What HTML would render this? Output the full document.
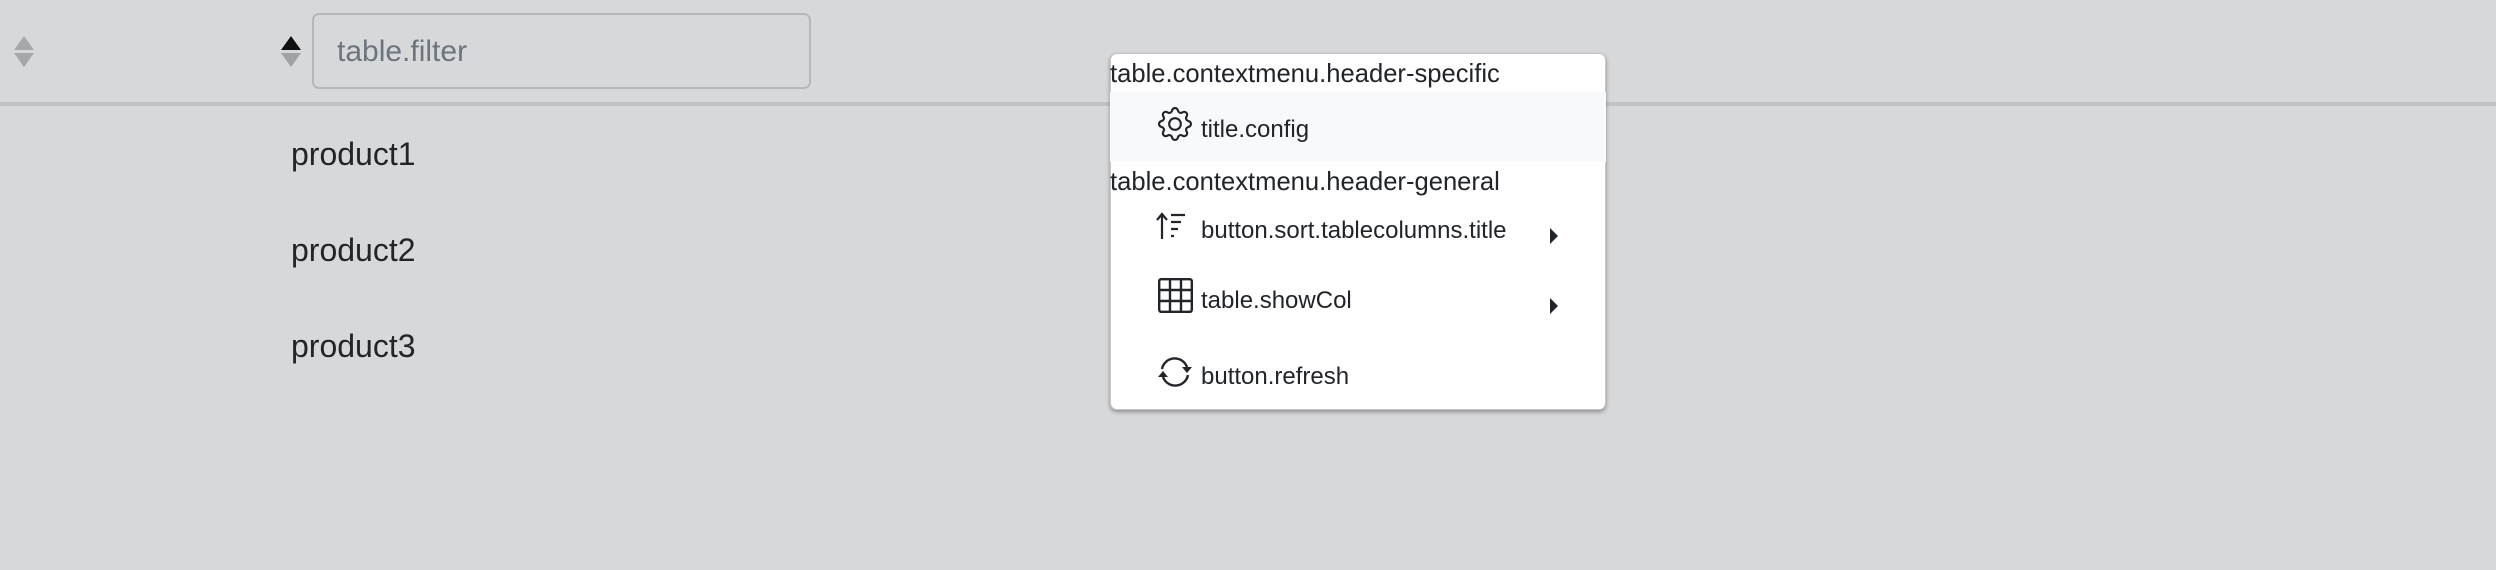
<!DOCTYPE html>
<html><head><meta charset="utf-8"><style>
html,body{margin:0;padding:0;}
body{width:2496px;height:570px;background:#d7d8da;position:relative;overflow:hidden;font-family:"Liberation Sans",sans-serif;color:#212529;}
.a{position:absolute;line-height:1;white-space:nowrap;}
</style></head><body>
<svg class="a" style="left:13px;top:36px" width="22" height="32" viewBox="0 0 22 32"><polygon points="11,0 21,14 1,14" fill="#a5a7a9"/><polygon points="11,31 21,17 1,17" fill="#a5a7a9"/></svg>
<svg class="a" style="left:280px;top:36px" width="22" height="32" viewBox="0 0 22 32"><polygon points="11,0 21,14 1,14" fill="#111"/><polygon points="11,31 21,17 1,17" fill="#a0a2a4"/></svg>
<div class="a" style="left:312px;top:13px;width:495px;height:72px;border:2px solid #b3b8bd;border-radius:7px;"></div>
<div class="a" style="left:337px;top:37px;font-size:30px;color:#6c757d">table.filter</div>
<div class="a" style="left:0;top:102px;width:2496px;height:4px;background:#c0c3c6"></div>
<div class="a" style="left:291px;top:138px;font-size:32px">product1</div>
<div class="a" style="left:291px;top:234px;font-size:32px">product2</div>
<div class="a" style="left:291px;top:330px;font-size:32px">product3</div>
<div class="a" style="left:1110px;top:53px;width:496px;height:357px;background:#fff;border-radius:7px;box-shadow:0 2px 4px rgba(0,0,0,.35);border:1px solid #c4c6c8;box-sizing:border-box"></div>
<div class="a" style="left:1110px;top:92px;width:496px;height:70px;background:#f8f9fa"></div>
<div class="a" style="left:1110px;top:62px;font-size:25.6px">table.contextmenu.header-specific</div>
<div class="a" style="left:1110px;top:170px;font-size:25.6px">table.contextmenu.header-general</div>
<svg class="a" style="left:1158px;top:107px" width="34" height="34" viewBox="0 0 16 16"><path fill="#212529" d="M8 4.754a3.246 3.246 0 1 0 0 6.492 3.246 3.246 0 0 0 0-6.492zM5.754 8a2.246 2.246 0 1 1 4.492 0 2.246 2.246 0 0 1-4.492 0z"/><path fill="#212529" d="M9.796 1.343c-.527-1.790-3.065-1.790-3.592 0l-.094.319a.873.873 0 0 1-1.255.52l-.292-.16c-1.640-.892-3.433.902-2.540 2.541l.159.292a.873.873 0 0 1-.52 1.255l-.319.094c-1.790.527-1.790 3.065 0 3.592l.319.094a.873.873 0 0 1 .52 1.255l-.16.292c-.892 1.640.901 3.434 2.541 2.540l.292-.159a.873.873 0 0 1 1.255.52l.094.319c.527 1.790 3.065 1.790 3.592 0l.094-.319a.873.873 0 0 1 1.255-.52l.292.16c1.640.893 3.434-.902 2.540-2.541l-.159-.292a.873.873 0 0 1 .52-1.255l.319-.094c1.790-.527 1.790-3.065 0-3.592l-.319-.094a.873.873 0 0 1-.52-1.255l.16-.292c.893-1.640-.902-3.433-2.541-2.540l-.292.159a.873.873 0 0 1-1.255-.52l-.094-.319zm-2.633.283c.246-.835 1.428-.835 1.674 0l.094.319a1.873 1.873 0 0 0 2.693 1.115l.291-.16c.764-.415 1.600.42 1.184 1.185l-.159.292a1.873 1.873 0 0 0 1.116 2.692l.318.094c.835.246.835 1.428 0 1.674l-.319.094a1.873 1.873 0 0 0-1.115 2.693l.16.291c.415.764-.42 1.600-1.185 1.184l-.291-.159a1.873 1.873 0 0 0-2.693 1.116l-.094.318c-.246.835-1.428.835-1.674 0l-.094-.319a1.873 1.873 0 0 0-2.692-1.115l-.292.16c-.764.415-1.600-.42-1.184-1.185l.159-.291A1.873 1.873 0 0 0 1.945 8.930l-.319-.094c-.835-.246-.835-1.428 0-1.674l.319-.094A1.873 1.873 0 0 0 3.060 4.377l-.16-.292c-.415-.764.42-1.600 1.185-1.184l.292.159a1.873 1.873 0 0 0 2.692-1.115l.094-.319z"/></svg>
<div class="a" style="left:1201px;top:118px;font-size:24px">title.config</div>
<svg class="a" style="left:1156px;top:211px" width="36" height="30" viewBox="0 0 36 30"><path d="M6 28V4M1 9l5-6 5 6" stroke="#212529" stroke-width="2.2" fill="none"/><path d="M15 4h14M15 11h10M15 18h7M15 25h3" stroke="#212529" stroke-width="2.2"/></svg>
<div class="a" style="left:1201px;top:219px;font-size:24px">button.sort.tablecolumns.title</div>
<svg class="a" style="left:1550px;top:228px" width="9" height="16"><polygon points="0,0 8,8 0,16" fill="#212529"/></svg>
<svg class="a" style="left:1158px;top:278px" width="35" height="35" viewBox="0 0 35 35"><rect x="1.2" y="1.2" width="32.6" height="32.6" rx="2" fill="none" stroke="#212529" stroke-width="2.4"/><path d="M12 1v33M23 1v33M1 12h33M1 23h33" stroke="#212529" stroke-width="2.4"/></svg>
<div class="a" style="left:1201px;top:289px;font-size:24px">table.showCol</div>
<svg class="a" style="left:1550px;top:298px" width="9" height="16"><polygon points="0,0 8,8 0,16" fill="#212529"/></svg>
<svg class="a" style="left:1157px;top:356px" width="36" height="32" viewBox="0 0 36 32"><path d="M5 13A13 13 0 0 1 30 11M31 19A13 13 0 0 1 6 21" stroke="#212529" stroke-width="2.4" fill="none"/><polygon points="25,11 35,11 30,17" fill="#212529"/><polygon points="1,21 11,21 6,15" fill="#212529"/></svg>
<div class="a" style="left:1201px;top:365px;font-size:24px">button.refresh</div>
</body></html>
